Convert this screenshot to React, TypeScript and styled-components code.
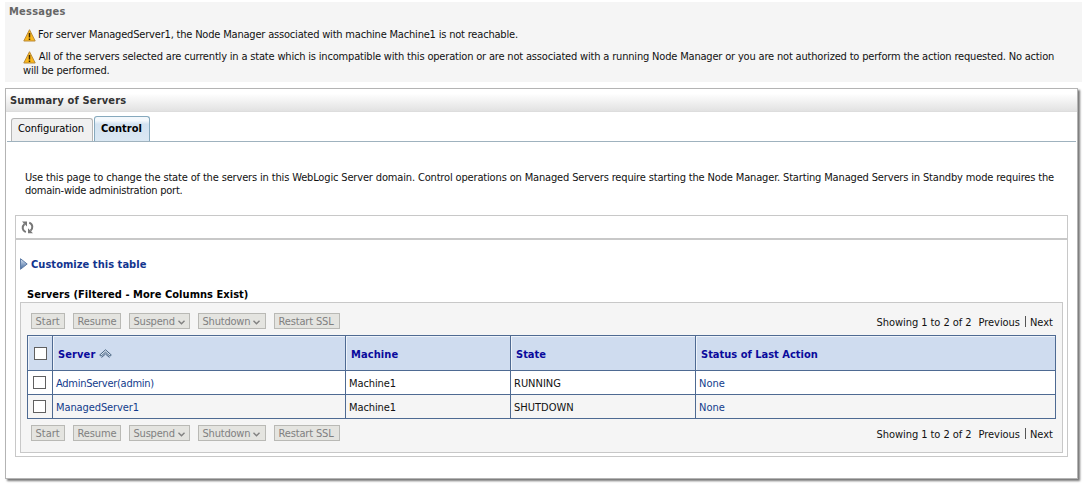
import React from "react";
import styled, { createGlobalStyle } from "styled-components";

const GlobalStyle = createGlobalStyle`
  * { box-sizing: border-box; }
  svg { flex: none; }
  body {
    margin: 0;
    background: #fff;
    color: #111;
    font: 11px/14px "DejaVu Sans Condensed", "DejaVu Sans", sans-serif;
  }
`;

const Page = styled.div`
  width: 1089px;
  height: 493px;
  padding: 2px 0 0 5px;
  overflow: hidden;
`;

const Text = styled.span<{ $track?: number }>`
  white-space: nowrap;
  letter-spacing: ${(p) => p.$track ?? 0}px;
`;

const Messages = styled.section`
  width: 1077px;
  height: 80px;
  padding: 3px 4px;
  background: #f5f5f5;
`;

const MessagesTitle = styled.h2`
  margin: 0 0 9px;
  font-size: 11px;
  line-height: 14px;
  color: #666;
`;

const Message = styled.div`
  display: flex;
  gap: 2px;
  height: 14px;
  margin: 0 0 8px 14px;
`;

const MessageTail = styled.div`
  margin: -8px 0 0 14px;
`;

const Panel = styled.section`
  width: 1073px;
  height: 391px;
  margin-top: 6px;
  border: 1px solid #b4b4b4;
  box-shadow: 2px 2px 2px #777;
  background: #fff;
`;

const PanelTitle = styled.h1`
  margin: 0;
  height: 23px;
  padding: 5px 4px 0;
  border-bottom: 1px solid #ddd;
  background: linear-gradient(#fff 20%, #e2e2e2);
  font-size: 11px;
  line-height: 14px;
  color: #333;
`;

const Tabs = styled.nav`
  display: flex;
  align-items: flex-end;
  gap: 1px;
  height: 30px;
  margin: 0 1px;
  padding-left: 4px;
  border-bottom: 1px solid #9fb2be;
`;

const Tab = styled.div<{ $active?: boolean; $width: number }>`
  width: ${(p) => p.$width}px;
  height: ${(p) => (p.$active ? 25 : 23)}px;
  padding: ${(p) => (p.$active ? 5 : 3)}px 0 0 6px;
  border: 1px solid ${(p) => (p.$active ? "#86a9bd" : "#b5b5b5")};
  border-bottom: 0;
  border-radius: 3px 3px 0 0;
  background: ${(p) => (p.$active ? "linear-gradient(#f3f8fc 15%, #d3e3f1 30%, #dbe8f3)" : "#f0f0f0")};
  font-weight: ${(p) => (p.$active ? 700 : 400)};
  color: #000;
`;

const Intro = styled.div`
  display: flex;
  flex-direction: column;
  height: 73px;
  padding: 29px 0 0 19px;
  line-height: 13px;
`;

const Frame = styled.div`
  width: 1053px;
  height: 242px;
  margin-left: 9px;
  border: 1px solid #c8c8c8;
`;

const RefreshBar = styled.div`
  height: 24px;
  padding: 5px 5px 0;
  border-bottom: 2px solid #c8c8c8;
`;

const Customize = styled.div`
  display: flex;
  align-items: flex-start;
  gap: 3px;
  margin: 18px 0 16px 4px;
  height: 14px;
  font-weight: 700;
  color: #12348e;
`;

const Caption = styled.div`
  height: 14px;
  padding-left: 11px;
  font-weight: 700;
  color: #000;
`;

const TableBox = styled.div`
  width: 1043px;
  height: 151px;
  margin-left: 4px;
  padding: 0 6px;
  border: 1px solid #c8c8c8;
  background: #f5f5f5;
`;

const Toolbar = styled.div<{ $bottom?: boolean }>`
  display: flex;
  align-items: flex-start;
  gap: 8px;
  height: 32px;
  padding: ${(p) => (p.$bottom ? 6 : 10)}px 3px 0 4px;
`;

const Button = styled.div<{ $width: number }>`
  display: flex;
  align-items: flex-start;
  gap: 3px;
  width: ${(p) => p.$width}px;
  height: 16px;
  padding: 1px 0 0 3.5px;
  border: 1px solid #b9b9b5;
  background: #e4e4e0;
  color: #808080;
`;

const Pager = styled.div`
  display: flex;
  margin: 3px 0 0 auto;
`;

const PreviousLabel = styled(Text)`
  margin-left: 7px;
`;

const Divider = styled.i`
  width: 1px;
  height: 11px;
  margin: 0 4px 0 5px;
  background: #555;
`;

const Grid = styled.div`
  display: grid;
  grid-template-columns: 25px 293px 165px 185px 360px;
  grid-template-rows: 35px 24px 24px;
  width: 1029px;
  height: 84px;
  border: solid #4e6a92;
  border-width: 0 0 1px 1px;
`;

const Cell = styled.div<{ $kind: "head" | "even" | "odd"; $link?: boolean }>`
  display: flex;
  align-items: center;
  gap: 4px;
  padding: ${(p) => (p.$kind === "head" ? "4px 0 0 5px" : "3px 0 0 3px")};
  border: solid #4e6a92;
  border-width: 1px 1px 0 0;
  font-weight: ${(p) => (p.$kind === "head" ? 700 : 400)};
  color: ${(p) => (p.$kind === "head" ? "#0a0a9c" : p.$link ? "#123c8c" : "#111")};
  background: ${(p) => (p.$kind === "head" ? "#cfdcef" : p.$kind === "even" ? "#fff" : "#f5f5f5")};
  box-shadow: ${(p) => (p.$kind === "head" ? "inset 1px 1px 0 #eef3fa" : "none")};
`;

const Checkbox = styled.i<{ $head?: boolean }>`
  width: 13px;
  height: 13px;
  margin: 0 0 3px ${(p) => (p.$head ? 1 : 2)}px;
  border: 1px solid #606060;
  background: #fff;
`;

const SortSvg = styled.svg`
  margin-bottom: 2px;
`;

const ChevronSvg = styled.svg`
  margin-top: 5px;
`;

const WarningIcon = () => (
  <svg width="13" height="14" viewBox="0 0 13 14">
    <path d="M6.500 1.700 12.200 13H.8Z" fill="#fbb81c" stroke="#b98a3a" strokeLinejoin="round" />
    <path d="M6.500 5v4.500M6.500 10.500v1.500" stroke="#3b2400" strokeWidth="1.500" />
  </svg>
);

const RefreshIcon = () => (
  <svg width="13" height="13" viewBox="0 0 13 13" fill="none" stroke="#777" strokeWidth="2">
    <path d="M4.800 11.200C1 9.500.800 5.500 3.500 3M8.200 1.600C12 3 12.200 7.500 9.500 9.800" />
    <path d="M1 .5h5v5ZM12 12.300H7v-5Z" fill="#777" stroke="none" />
  </svg>
);

const ArrowIcon = () => (
  <svg width="8" height="12" viewBox="0 0 8 12">
    <defs>
      <linearGradient id="arrow" x1="0" y1="0" x2="0" y2="1">
        <stop offset="0" stopColor="#dce8f6" />
        <stop offset="1" stopColor="#3f669c" />
      </linearGradient>
    </defs>
    <path d="M.5.700 7.200 6 .5 11.300Z" fill="url(#arrow)" stroke="#5f7ca6" />
  </svg>
);

const SortIcon = () => (
  <SortSvg width="13" height="10" viewBox="0 0 13 10" fill="none" stroke="#45617f">
    <path d="M.7 6 6.500.8 12.300 6 11 7.200 6.500 3.200 2 7.200Z" fill="#dbe6f2" />
    <path d="M2.500 8.500 6.500 5l4 3.500" />
  </SortSvg>
);

const Chevron = () => (
  <ChevronSvg width="7" height="5" viewBox="0 0 7 5" fill="none" stroke="#808080" strokeWidth="1.400">
    <path d="m.5.700 3 3 3-3" />
  </ChevronSvg>
);

const actions = [
  { label: "Start", width: 34, menu: false, track: 0 },
  { label: "Resume", width: 48, menu: false, track: -0.1 },
  { label: "Suspend", width: 61, menu: true, track: -0.2 },
  { label: "Shutdown", width: 68, menu: true, track: -0.2 },
  { label: "Restart SSL", width: 66, menu: false, track: -0.15 },
];

const ActionBar = ({ bottom }: { bottom?: boolean }) => (
  <Toolbar $bottom={bottom}>
    {actions.map((a) => (
      <Button key={a.label} $width={a.width}>
        <Text $track={a.track}>{a.label}</Text>
        {a.menu && <Chevron />}
      </Button>
    ))}
    <Pager>
      <Text $track={-0.05}>Showing 1 to 2 of 2</Text>
      <PreviousLabel $track={-0.05}>Previous</PreviousLabel>
      <Divider />
      <Text>Next</Text>
    </Pager>
  </Toolbar>
);

const servers = [
  { name: "AdminServer(admin)", machine: "Machine1", state: "RUNNING", kind: "even" as const, track: -0.27 },
  { name: "ManagedServer1", machine: "Machine1", state: "SHUTDOWN", kind: "odd" as const, track: -0.1 },
];

export default function App() {
  return (
    <Page>
      <GlobalStyle />
      <Messages>
        <MessagesTitle><Text $track={0.25}>Messages</Text></MessagesTitle>
        <Message>
          <WarningIcon />
          <Text $track={-0.19}>For server ManagedServer1, the Node Manager associated with machine Machine1 is not reachable.</Text>
        </Message>
        <Message>
          <WarningIcon />
          <Text $track={-0.18}>&#8202;All of the servers selected are currently in a state which is incompatible with this operation or are not associated with a running Node Manager or you are not authorized to perform the action requested. No action</Text>
        </Message>
        <MessageTail><Text $track={-0.2}>will be performed.</Text></MessageTail>
      </Messages>
      <Panel>
        <PanelTitle><Text $track={0.16}>Summary of Servers</Text></PanelTitle>
        <Tabs>
          <Tab $width={82}><Text $track={-0.1}>Configuration</Text></Tab>
          <Tab $width={56} $active><Text>Control</Text></Tab>
        </Tabs>
        <Intro>
          <Text $track={-0.155}>Use this page to change the state of the servers in this WebLogic Server domain. Control operations on Managed Servers require starting the Node Manager. Starting Managed Servers in Standby mode requires the</Text>
          <Text $track={-0.25}>domain-wide administration port.</Text>
        </Intro>
        <Frame>
          <RefreshBar><RefreshIcon /></RefreshBar>
          <Customize><ArrowIcon /><Text $track={0.05}>Customize this table</Text></Customize>
          <Caption><Text $track={0.04}>Servers (Filtered - More Columns Exist)</Text></Caption>
          <TableBox>
            <ActionBar />
            <Grid>
              <Cell $kind="head"><Checkbox $head /></Cell>
              <Cell $kind="head"><Text $track={0.1}>Server</Text><SortIcon /></Cell>
              <Cell $kind="head"><Text $track={0.1}>Machine</Text></Cell>
              <Cell $kind="head"><Text>State</Text></Cell>
              <Cell $kind="head"><Text>Status of Last Action</Text></Cell>
              {servers.map((s) => (
                <React.Fragment key={s.name}>
                  <Cell $kind={s.kind}><Checkbox /></Cell>
                  <Cell $kind={s.kind} $link><Text $track={s.track}>{s.name}</Text></Cell>
                  <Cell $kind={s.kind}><Text $track={-0.1}>{s.machine}</Text></Cell>
                  <Cell $kind={s.kind}><Text>{s.state}</Text></Cell>
                  <Cell $kind={s.kind} $link><Text>None</Text></Cell>
                </React.Fragment>
              ))}
            </Grid>
            <ActionBar bottom />
          </TableBox>
        </Frame>
      </Panel>
    </Page>
  );
}
